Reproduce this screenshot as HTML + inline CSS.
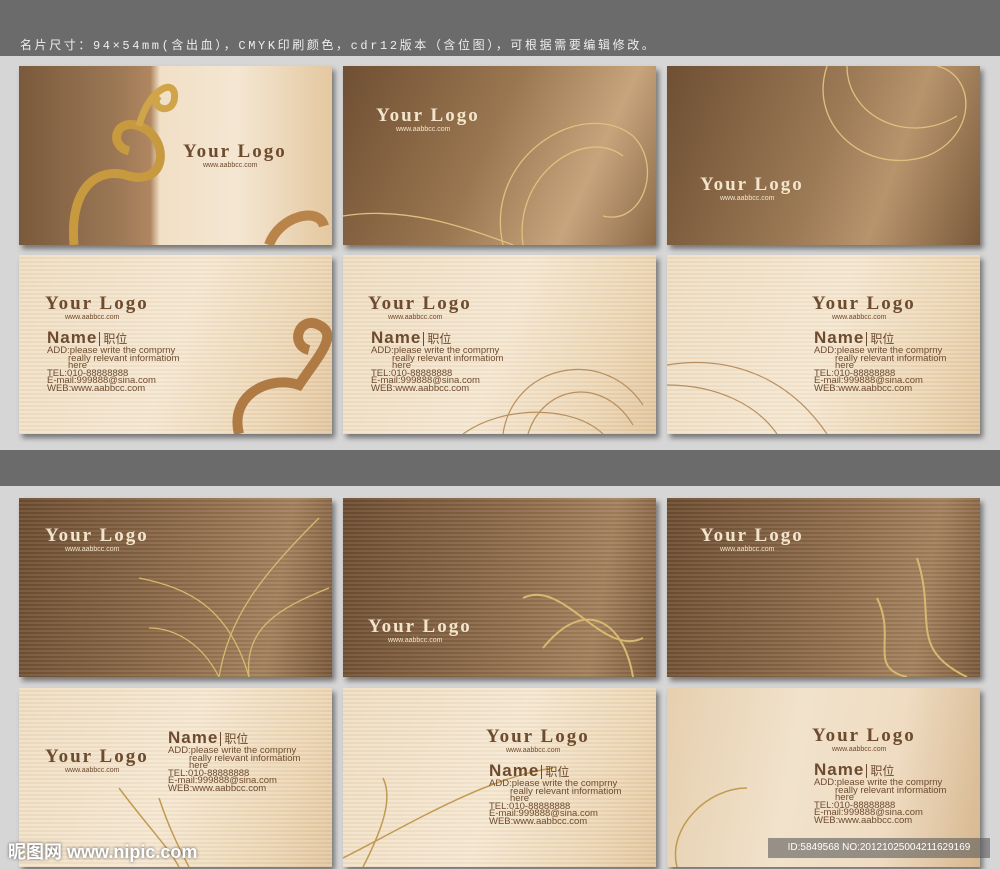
<!DOCTYPE html>
<html><head><meta charset="utf-8"><style>
*{margin:0;padding:0;box-sizing:border-box}
body{width:1000px;height:869px;background:#6b6b6b;position:relative;overflow:hidden;font-family:"Liberation Sans","Noto Sans CJK SC",sans-serif}
.top{position:absolute;left:20px;top:36px;color:#eee;font-size:12px;letter-spacing:2.6px;font-family:"Liberation Mono","Noto Sans CJK SC",monospace}
.panel{position:absolute;left:0;width:1000px;background:#d6d6d6}
.card{position:absolute;width:313px;height:179px;overflow:hidden;box-shadow:3px 4px 5px rgba(0,0,0,.45)}
.dk{background:linear-gradient(115deg,#6f4f33 0%,#9a7650 45%,#c7a47c 75%,#8c6a48 100%)}
.dk2{background:repeating-linear-gradient(180deg,rgba(255,255,255,.06) 0 2px,rgba(0,0,0,.06) 2px 4px),linear-gradient(100deg,#6e4e32 0%,#8e6c4a 50%,#a5825e 80%,#7d5b3c 100%)}
.lt{background:repeating-linear-gradient(180deg,rgba(255,255,255,.15) 0 2px,rgba(180,140,90,.06) 2px 4px),linear-gradient(110deg,#eedcc0 0%,#f4e6d0 50%,#ecd5b3 80%,#e0c49c 100%)}
.logo{position:absolute;font-family:"Liberation Serif",serif;font-weight:bold;font-size:19px;letter-spacing:2px;line-height:20px;white-space:nowrap}
.logo small{display:block;font-family:"Liberation Sans",sans-serif;font-weight:normal;font-size:7px;line-height:7px;letter-spacing:0;margin-left:20px}
.dk .logo,.dk2 .logo{color:#f3e4cc}
.lt .logo{color:#6d4b2e}
.info{position:absolute;color:#6d4b2e;font-size:9.5px;line-height:7.6px;white-space:nowrap}
.info b{font-size:17px;line-height:18px;font-weight:900;letter-spacing:1px}
.info .j{font-size:12px;border-left:1px solid #6d4b2e;padding-left:3px;margin-left:2px}
.info .ind{padding-left:21px}
svg{position:absolute;left:0;top:0}
.wm{position:absolute;left:8px;top:838px;color:#fff;font-size:18px;font-weight:bold;text-shadow:0 0 3px #555}
.id{position:absolute;left:768px;top:838px;width:222px;height:20px;background:rgba(90,90,90,.6);color:#fff;font-size:10px;line-height:20px;text-align:center}
</style></head><body>
<div class="top">名片尺寸：94×54mm(含出血），CMYK印刷颜色，cdr12版本（含位图），可根据需要编辑修改。</div>
<div class="panel" style="top:56px;height:394px"></div>
<div class="panel" style="top:486px;height:383px"></div>

<!-- row1 -->
<div class="card lt" style="left:19px;top:66px;background:linear-gradient(90deg,#7a5a3c 0,#9a7654 30%,#b08660 42%,#f1e0c6 45%,#f4e6d2 70%,#e4c8a0 100%)">
<svg width="313" height="179"><path d="M55 179 C50 120 80 100 110 110 C150 120 150 70 120 60 C95 52 90 80 110 85" fill="none" stroke="#c89a40" stroke-width="9"/><path d="M120 60 C130 20 160 10 155 35 C150 50 130 40 140 30" fill="none" stroke="#d0a448" stroke-width="7"/><path d="M250 179 C260 150 300 140 305 160" fill="none" stroke="#b8844a" stroke-width="10"/></svg>
<div class="logo" style="left:164px;top:76px">Your Logo<small>www.aabbcc.com</small></div></div>
<div class="card dk" style="left:343px;top:66px">
<svg width="313" height="179"><g fill="none" stroke="#e0c080" stroke-width="1.3"><path d="M160 179 C140 90 240 30 290 70 C320 100 300 160 260 150"/><path d="M180 179 C170 110 240 60 280 90"/><path d="M0 150 C60 140 120 160 170 179"/></g></svg>
<div class="logo" style="left:33px;top:40px">Your Logo<small>www.aabbcc.com</small></div></div>
<div class="card dk" style="left:667px;top:66px;background:linear-gradient(110deg,#6f4f33 0%,#9c7a56 50%,#b8946c 70%,#7a5a3c 100%)">
<svg width="313" height="179"><g fill="none" stroke="#e0c080" stroke-width="1.3"><path d="M160 0 C140 60 200 110 260 90 C310 70 310 10 270 0"/><path d="M180 0 C180 50 240 80 290 50"/></g></svg>
<div class="logo" style="left:33px;top:109px">Your Logo<small>www.aabbcc.com</small></div></div>

<!-- row2 -->
<div class="card lt" style="left:19px;top:255px">
<svg width="313" height="179"><path d="M220 179 C210 140 250 120 280 130 C300 100 320 80 300 70 C280 60 270 90 290 95" fill="none" stroke="#b07a45" stroke-width="10"/></svg>
<div class="logo" style="left:26px;top:39px">Your Logo<small>www.aabbcc.com</small></div>
<div class="info" style="left:28px;top:74px"><b>Name</b><span class="j">职位</span><br>ADD:please write the comprny<br><span class="ind">really relevant informatiom</span><br><span class="ind">here</span><br>TEL:010-88888888<br>E-mail:999888@sina.com<br>WEB:www.aabbcc.com</div></div>
<div class="card lt" style="left:343px;top:255px">
<svg width="313" height="179"><g fill="none" stroke="#b89060" stroke-width="1.2"><path d="M160 179 C170 110 260 90 300 150"/><path d="M185 179 C200 130 260 120 290 170"/><path d="M120 179 C160 150 230 150 260 179"/></g></svg>
<div class="logo" style="left:25px;top:39px">Your Logo<small>www.aabbcc.com</small></div>
<div class="info" style="left:28px;top:74px"><b>Name</b><span class="j">职位</span><br>ADD:please write the comprny<br><span class="ind">really relevant informatiom</span><br><span class="ind">here</span><br>TEL:010-88888888<br>E-mail:999888@sina.com<br>WEB:www.aabbcc.com</div></div>
<div class="card lt" style="left:667px;top:255px">
<svg width="313" height="179"><g fill="none" stroke="#b89060" stroke-width="1.2"><path d="M0 110 C60 100 120 120 160 179"/><path d="M0 130 C50 130 90 150 110 179"/></g></svg>
<div class="logo" style="left:145px;top:39px">Your Logo<small>www.aabbcc.com</small></div>
<div class="info" style="left:147px;top:74px"><b>Name</b><span class="j">职位</span><br>ADD:please write the comprny<br><span class="ind">really relevant informatiom</span><br><span class="ind">here</span><br>TEL:010-88888888<br>E-mail:999888@sina.com<br>WEB:www.aabbcc.com</div></div>

<!-- row3 -->
<div class="card dk2" style="left:19px;top:498px">
<svg width="313" height="179"><g fill="none" stroke="#d8b870" stroke-width="1.3"><path d="M200 179 C210 120 240 80 300 20"/><path d="M230 179 C225 130 260 110 310 90"/><path d="M120 80 C170 90 210 110 230 179"/><path d="M200 179 C180 140 150 130 130 130"/></g></svg>
<div class="logo" style="left:26px;top:28px">Your Logo<small>www.aabbcc.com</small></div></div>
<div class="card dk2" style="left:343px;top:498px">
<svg width="313" height="179"><g fill="none" stroke="#d8b870" stroke-width="2"><path d="M180 100 C220 80 260 160 300 140"/><path d="M200 150 C240 100 280 120 290 179"/></g></svg>
<div class="logo" style="left:25px;top:119px">Your Logo<small>www.aabbcc.com</small></div></div>
<div class="card dk2" style="left:667px;top:498px">
<svg width="313" height="179"><g fill="none" stroke="#d8b870" stroke-width="2"><path d="M210 100 C230 140 200 170 240 179"/><path d="M250 60 C270 120 240 150 300 179"/></g></svg>
<div class="logo" style="left:33px;top:28px">Your Logo<small>www.aabbcc.com</small></div></div>

<!-- row4 -->
<div class="card lt" style="left:19px;top:688px">
<svg width="313" height="179"><g fill="none" stroke="#c09a50" stroke-width="1.5"><path d="M100 100 C130 140 150 160 160 179"/><path d="M140 110 C150 140 160 160 170 179"/></g></svg>
<div class="logo" style="left:26px;top:59px">Your Logo<small>www.aabbcc.com</small></div>
<div class="info" style="left:149px;top:41px"><b>Name</b><span class="j">职位</span><br>ADD:please write the comprny<br><span class="ind">really relevant informatiom</span><br><span class="ind">here</span><br>TEL:010-88888888<br>E-mail:999888@sina.com<br>WEB:www.aabbcc.com</div></div>
<div class="card lt" style="left:343px;top:688px">
<svg width="313" height="179"><g fill="none" stroke="#c09a50" stroke-width="1.5"><path d="M0 170 C60 140 140 90 210 80"/><path d="M20 179 C40 140 50 110 40 90"/></g></svg>
<div class="logo" style="left:143px;top:39px">Your Logo<small>www.aabbcc.com</small></div>
<div class="info" style="left:146px;top:74px"><b>Name</b><span class="j">职位</span><br>ADD:please write the comprny<br><span class="ind">really relevant informatiom</span><br><span class="ind">here</span><br>TEL:010-88888888<br>E-mail:999888@sina.com<br>WEB:www.aabbcc.com</div></div>
<div class="card lt" style="left:667px;top:688px;background:linear-gradient(100deg,#e6cfae 0%,#f1e2cc 40%,#efdcc2 70%,#d7b890 100%)">
<svg width="313" height="179"><g fill="none" stroke="#c09a50" stroke-width="1.5"><path d="M10 179 C0 140 40 100 80 100"/></g></svg>
<div class="logo" style="left:145px;top:38px">Your Logo<small>www.aabbcc.com</small></div>
<div class="info" style="left:147px;top:73px"><b>Name</b><span class="j">职位</span><br>ADD:please write the comprny<br><span class="ind">really relevant informatiom</span><br><span class="ind">here</span><br>TEL:010-88888888<br>E-mail:999888@sina.com<br>WEB:www.aabbcc.com</div></div>

<div class="wm">昵图网 www.nipic.com</div>
<div class="id">ID:5849568 NO:20121025004211629169</div>
</body></html>
